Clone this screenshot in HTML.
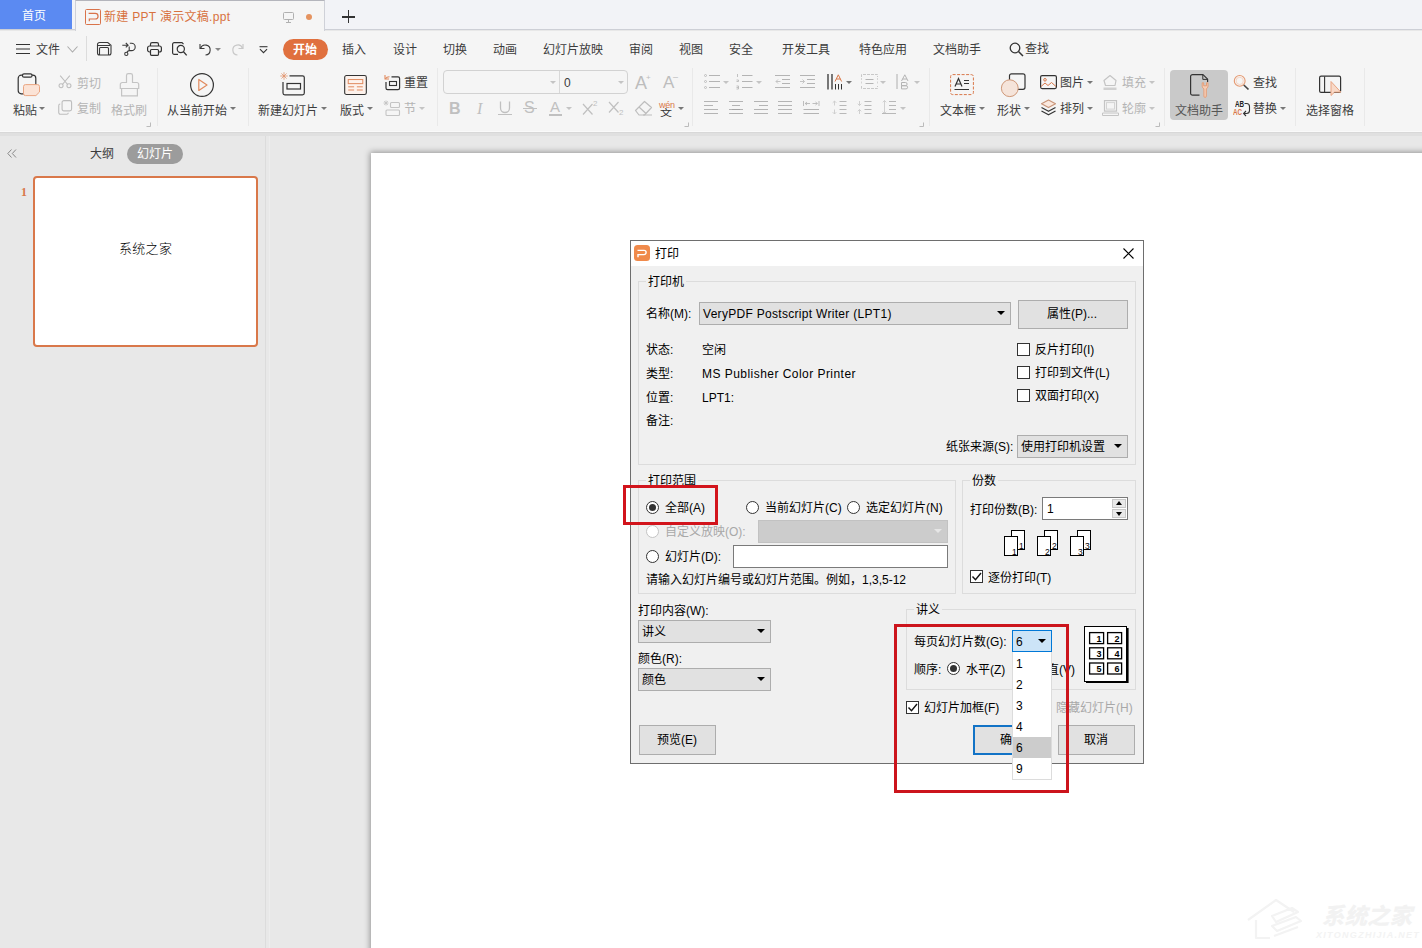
<!DOCTYPE html>
<html lang="zh-CN">
<head>
<meta charset="utf-8">
<title>新建 PPT 演示文稿.ppt</title>
<style>
*{box-sizing:border-box;margin:0;padding:0}
html,body{width:1422px;height:948px;overflow:hidden;background:#e8e8e8}
body{position:relative;font-family:"Liberation Sans","Noto Sans CJK SC",sans-serif;font-size:12px;color:#3c3c3c;}
.a{position:absolute}
.t{position:absolute;white-space:nowrap;line-height:16px;height:16px;font-size:12px;margin-top:1px}
.g{color:#b4b4b4}
svg{position:absolute;overflow:visible}
.sep{position:absolute;width:1px;background:#e9e9e9;top:68px;height:58px}
.ar{position:absolute;width:0;height:0;border-left:3px solid transparent;border-right:3px solid transparent;border-top:3px solid #777}
.ar.g{border-top-color:#c4c4c4}
/* dialog */
.t.d{color:#000}
.t.lbl{background:#f0f0f0;padding:0 2px}
.grp{position:absolute;border:1px solid #dcdcdc}
.grp>span{position:absolute;top:-9px;left:7px;background:#f0f0f0;padding:0 2px;line-height:16px;white-space:nowrap;color:#000}
.cmb{position:absolute;background:#e1e1e1;border:1px solid #adadad}
.dar{position:absolute;width:0;height:0;border-left:4px solid transparent;border-right:4px solid transparent;border-top:4px solid #000}
.btn{position:absolute;background:#e1e1e1;border:1px solid #adadad;text-align:center;color:#000}
.chk{position:absolute;width:13px;height:13px;border:1px solid #333;background:#fff}
.rad{position:absolute;width:13px;height:13px;border:1px solid #333;border-radius:50%;background:#fff}
.rad.on::after{content:"";position:absolute;left:2px;top:2px;width:7px;height:7px;border-radius:50%;background:#333}
</style>
</head>
<body>
<!-- TABBAR -->
<div class="a" id="tabbar" style="left:0;top:0;width:1422px;height:30px;background:#f2f3f7;border-bottom:1px solid #cdcfd6"></div>
<div class="a" style="left:0;top:0;width:72px;height:29px;background:#5b8af2"></div>
<div class="t" style="left:22px;top:7px;color:#fff">首页</div>
<div class="a" style="left:75px;top:0;width:250px;height:31px;background:#f5f5f5;border:1px solid #cfd1d8;border-top-color:#b4b5bc;border-bottom:none"></div>
<!-- MENU+RIBBON BG -->
<div class="a" style="left:0;top:31px;width:1422px;height:101px;background:#f5f5f5"></div>
<div class="a" style="left:0;top:131px;width:1422px;height:1px;background:#fafafa"></div><div class="a" style="left:0;top:132px;width:1422px;height:1px;background:#d8d8d8"></div><div class="a" style="left:0;top:133px;width:1422px;height:3px;background:#e0e0e0"></div>
<!-- TOP1 -->
<svg style="left:85px;top:9px" width="16" height="16" viewBox="0 0 16 16"><rect x=".5" y=".5" width="15" height="15" rx="1" fill="none" stroke="#d9734a" stroke-width="1"/><path d="M4.300 12.300V10H10.200a2.850 2.850 0 0 0 0-5.700H3.600" fill="none" stroke="#d9734a" stroke-width="1.200"/></svg>
<div class="t" style="left:104px;top:8px;color:#d8723f;letter-spacing:0.3px">新建 PPT 演示文稿.ppt</div>
<svg style="left:283px;top:12px" width="11" height="11" viewBox="0 0 11 11"><rect x=".5" y=".5" width="10" height="7" rx="1" fill="none" stroke="#b0b0b0"/><path d="M5.5 7.5v2.5M3 10.5h5" stroke="#b0b0b0" fill="none"/></svg>
<div class="a" style="left:306px;top:14px;width:6px;height:6px;border-radius:50%;background:#e5935f"></div>
<div class="a" style="left:342px;top:16px;width:13px;height:1.5px;background:#333"></div>
<div class="a" style="left:347.7px;top:10px;width:1.5px;height:13px;background:#333"></div>
<!-- menu row -->
<svg style="left:16px;top:43px" width="15" height="12" viewBox="0 0 15 12"><path d="M0 1.5h14M0 6h14M0 10.5h14" stroke="#333" stroke-width="1.2" fill="none"/></svg>
<div class="t" style="left:36px;top:41px">文件</div>
<svg style="left:67px;top:46px" width="11" height="7" viewBox="0 0 11 7"><path d="M.5 .5l5 5.5 5-5.5" stroke="#aaa" stroke-width="1.1" fill="none"/></svg>
<div class="a" style="left:86px;top:36px;width:1px;height:25px;background:#dcdcdc"></div>
<!-- save -->
<svg style="left:97px;top:42px" width="15" height="14" viewBox="0 0 15 14"><path d="M.5 2.500A2 2 0 0 1 2.500 .5h8.300l3.200 2.800v7.700a2 2 0 0 1-2 2H2.500a2 2 0 0 1-2-2z" fill="none" stroke="#3a3a3a" stroke-width="1.100"/><path d="M.5 3.500h12.500M2.500 13V6.500a1 1 0 0 1 1-1h7a1 1 0 0 1 1 1V13" fill="none" stroke="#3a3a3a" stroke-width="1.100"/></svg>
<!-- export -->
<svg style="left:122px;top:42px" width="15" height="15" viewBox="0 0 15 15"><path d="M.3 3.200h5.700M3.800 1l2.300 2.200-2.300 2.200" fill="none" stroke="#3a3a3a" stroke-width="1.100"/><path d="M7.800 1.200h1.700a3.700 3.700 0 0 1 0 7.400H7.200V4.500M7.200 8.600Q5.300 8.800 5 10.300" fill="none" stroke="#3a3a3a" stroke-width="1.100"/><circle cx="4.300" cy="11.900" r="1.600" fill="none" stroke="#3a3a3a" stroke-width="1.100"/></svg>
<!-- print -->
<svg style="left:147px;top:42px" width="15" height="14" viewBox="0 0 15 14"><path d="M3.500 4V2.200A1.600 1.600 0 0 1 5.100 .6h4.800a1.600 1.600 0 0 1 1.600 1.600V4" fill="none" stroke="#333" stroke-width="1.200"/><rect x=".6" y="4" width="13.800" height="6" rx="2" fill="none" stroke="#333" stroke-width="1.200"/><rect x="3.500" y="7.500" width="8" height="5.800" rx="1" fill="#f5f5f5" stroke="#333" stroke-width="1.200"/></svg>
<!-- preview -->
<svg style="left:172px;top:42px" width="16" height="15" viewBox="0 0 16 15"><path d="M6 12.400H2.200A1.600 1.600 0 0 1 .6 10.800V2.200A1.600 1.600 0 0 1 2.200 .6H10l1.500 1.500" fill="none" stroke="#333" stroke-width="1.200"/><circle cx="8.800" cy="7" r="3.600" fill="none" stroke="#333" stroke-width="1.200"/><path d="M11.500 9.800l3.200 3.600" stroke="#333" stroke-width="1.300" fill="none"/></svg>
<!-- undo -->
<svg style="left:199px;top:43px" width="13" height="13" viewBox="0 0 13 13"><path d="M1 1v4.500h4.500" fill="none" stroke="#3a3a3a" stroke-width="1.100"/><path d="M1.500 5.200A5 5 0 1 1 6.500 12" fill="none" stroke="#3a3a3a" stroke-width="1.100"/></svg>
<div class="ar" style="left:215px;top:48px;border-top-color:#888"></div>
<!-- redo -->
<svg style="left:231px;top:43px" width="13" height="13" viewBox="0 0 13 13"><path d="M12 1v4.500H7.500" fill="none" stroke="#c8c8c8" stroke-width="1.200"/><path d="M11.500 5.200A5 5 0 1 0 6.500 12" fill="none" stroke="#c8c8c8" stroke-width="1.200"/></svg>
<!-- qat dropdown -->
<svg style="left:259px;top:46px" width="9" height="8" viewBox="0 0 10 9"><path d="M.5 .8h9" stroke="#333" stroke-width="1.200"/><path d="M1 3.500l4 4 4-4" stroke="#333" stroke-width="1.200" fill="none"/></svg>
<div class="a" style="left:283px;top:39px;width:45px;height:21px;border-radius:11px;background:#e0703e"></div>
<div class="t" style="left:293px;top:41px;color:#fff;font-weight:bold">开始</div>
<div class="t" style="left:342px;top:41px">插入</div>
<div class="t" style="left:393px;top:41px">设计</div>
<div class="t" style="left:443px;top:41px">切换</div>
<div class="t" style="left:493px;top:41px">动画</div>
<div class="t" style="left:543px;top:41px">幻灯片放映</div>
<div class="t" style="left:629px;top:41px">审阅</div>
<div class="t" style="left:679px;top:41px">视图</div>
<div class="t" style="left:729px;top:41px">安全</div>
<div class="t" style="left:782px;top:41px">开发工具</div>
<div class="t" style="left:859px;top:41px">特色应用</div>
<div class="t" style="left:933px;top:41px">文档助手</div>
<svg style="left:1009px;top:42px" width="15" height="15" viewBox="0 0 15 15"><circle cx="6" cy="6" r="4.800" fill="none" stroke="#333" stroke-width="1.300"/><path d="M9.500 9.500l4.500 4.500" stroke="#333" stroke-width="1.500"/></svg>
<div class="t" style="left:1025px;top:40px">查找</div>
<!-- /TOP1 -->
<!-- TOP2 -->
<!-- ribbon group 1 -->
<svg style="left:17px;top:70px" width="25" height="27" viewBox="0 0 25 27"><rect x="1.200" y="5.200" width="17.600" height="18.600" rx="3" fill="none" stroke="#333" stroke-width="1.200"/><rect x="5.500" y="3.800" width="9.500" height="3.400" rx="1.500" fill="#f5f5f5" stroke="#333" stroke-width="1.200"/><path d="M8.500 14.600h12a2 2 0 0 1 2 2v5.400l-3.600 3.600H8.500a2 2 0 0 1-2-2v-7a2 2 0 0 1 2-2z" fill="#fbe3d6" stroke="#e9a582" stroke-width="1"/></svg>
<div class="t" style="left:13px;top:101.500px">粘贴</div><div class="ar" style="left:39px;top:107px"></div>
<svg style="left:58px;top:75px" width="14" height="13.500" viewBox="0 0 16 16" preserveAspectRatio="none"><path d="M2.500 .8l8.500 10.500M13.500 .8L5 11.300" stroke="#bdbdbd" stroke-width="1.200" fill="none"/><circle cx="3.500" cy="12.700" r="2.300" fill="none" stroke="#bdbdbd" stroke-width="1.200"/><circle cx="12.500" cy="12.700" r="2.300" fill="none" stroke="#bdbdbd" stroke-width="1.200"/></svg>
<div class="t g" style="left:77px;top:75px">剪切</div>
<svg style="left:58px;top:100px" width="14.500" height="15" viewBox="0 0 16 16" preserveAspectRatio="none"><rect x="4.500" y=".6" width="10.500" height="11" rx="2" fill="none" stroke="#bdbdbd" stroke-width="1.200"/><path d="M2.500 4.200A1.800 1.800 0 0 0 .8 6v7.400a1.800 1.800 0 0 0 1.800 1.800h7a1.800 1.800 0 0 0 1.800-1.600" fill="none" stroke="#bdbdbd" stroke-width="1.200"/></svg>
<div class="t g" style="left:77px;top:100px">复制</div>
<svg style="left:119px;top:73px" width="21" height="24" viewBox="0 0 21 24"><path d="M7.500 9.500V2.500a1.800 1.800 0 0 1 1.800-1.800h2.400a1.800 1.800 0 0 1 1.800 1.800v7h4.200a2 2 0 0 1 2 2v4H1.300v-4a2 2 0 0 1 2-2z" fill="none" stroke="#c4c4c4" stroke-width="1.200"/><path d="M2.600 15.500v7.300h15.800v-7.300" fill="none" stroke="#c4c4c4" stroke-width="1.200"/></svg>
<div class="t g" style="left:111px;top:101.500px">格式刷</div>
<svg style="left:146px;top:122px" width="5" height="5" viewBox="0 0 5 5"><path d="M.5 4.500h4V.5" stroke="#bbb" fill="none"/></svg>
<div class="sep" style="left:157px"></div>
<!-- group 2 -->
<svg style="left:188.500px;top:71.500px" width="26" height="26" viewBox="0 0 26 26"><circle cx="13" cy="13" r="11.400" fill="none" stroke="#333" stroke-width="1.200"/><path d="M9.800 7.500v11l8.200-5.500z" fill="none" stroke="#e08a5e" stroke-width="1.200" stroke-linejoin="round"/></svg>
<div class="t" style="left:167px;top:101.500px">从当前开始</div><div class="ar" style="left:230px;top:107px"></div>
<div class="sep" style="left:248px"></div>
<!-- group 3 -->
<svg style="left:280px;top:72px" width="26" height="24" viewBox="0 0 26 24"><path d="M4 .2v7.600M.2 4h7.600M1.400 1.400l5.200 5.200M6.600 1.400L1.400 6.600" stroke="#e08a5e" stroke-width=".7" fill="none"/><path d="M9.500 3.800H22.500a1.800 1.800 0 0 1 1.800 1.800V21a1.800 1.800 0 0 1-1.800 1.800H4.800A1.800 1.800 0 0 1 3 21V10" fill="none" stroke="#333" stroke-width="1.200"/><rect x="7" y="11.500" width="13.500" height="5.500" fill="none" stroke="#333" stroke-width="1.200"/></svg>
<div class="t" style="left:258px;top:101.500px">新建幻灯片</div><div class="ar" style="left:321px;top:107px"></div>
<svg style="left:344px;top:75px" width="23" height="20" viewBox="0 0 25 22"><rect x=".6" y=".6" width="23.800" height="20.800" rx="2" fill="#fdf2ec" stroke="#333" stroke-width="1.200"/><rect x="4.500" y="5" width="16" height="4.500" fill="none" stroke="#e08a5e" stroke-width="1.100"/><path d="M4.500 13h6.500M4.500 16.500h6.500M14 13h6.500M14 16.500h6.500" stroke="#e08a5e" stroke-width="1.100"/></svg>
<div class="t" style="left:340px;top:101.500px">版式</div><div class="ar" style="left:367px;top:107px"></div>
<svg style="left:383px;top:74px" width="18" height="17" viewBox="0 0 18 17"><path d="M2 1v4h4" fill="none" stroke="#e08a5e" stroke-width="1.100"/><path d="M2.300 4.800A5 5 0 0 1 6.500 2.800" fill="none" stroke="#e08a5e" stroke-width="1.100"/><path d="M8.500 2.800H15a1.600 1.600 0 0 1 1.600 1.600V14a1.600 1.600 0 0 1-1.600 1.600H4.600A1.600 1.600 0 0 1 3 14V8" fill="none" stroke="#333" stroke-width="1.200"/><rect x="6.500" y="7.500" width="7" height="4" fill="none" stroke="#333" stroke-width="1.100"/></svg>
<div class="t" style="left:404px;top:74px">重置</div>
<svg style="left:383px;top:100px" width="18" height="17" viewBox="0 0 18 17"><path d="M3 .5v5M.5 3h5M1.200 1.200l3.600 3.600M4.800 1.200L1.200 4.800" stroke="#c4c4c4" stroke-width=".9" fill="none"/><rect x="7.500" y="2.500" width="9" height="5" rx="1" fill="none" stroke="#c4c4c4" stroke-width="1.100"/><rect x="3" y="10" width="13.500" height="5.500" rx="1" fill="none" stroke="#c4c4c4" stroke-width="1.100"/></svg>
<div class="t g" style="left:404px;top:100px">节</div><div class="ar g" style="left:419px;top:107px"></div>
<div class="sep" style="left:437px"></div>
<!-- font group -->
<div class="a" style="left:443px;top:70px;width:185px;height:24px;border:1px solid #d2d2d2;border-radius:4px;background:#f5f5f5"></div>
<div class="a" style="left:559px;top:71px;width:1px;height:22px;background:#d8d8d8"></div>
<div class="ar g" style="left:550px;top:81px"></div><div class="ar g" style="left:618px;top:81px"></div>
<div class="t" style="left:564px;top:74px">0</div>
<div class="t" style="left:635px;top:74px;font-size:18px;color:#bdbdbd;font-weight:normal">A</div>
<div class="t" style="left:646px;top:69px;font-size:8px;color:#bdbdbd">+</div>
<div class="t" style="left:663px;top:74px;font-size:17px;color:#bdbdbd">A</div>
<div class="t" style="left:673px;top:68px;font-size:9px;color:#bdbdbd">–</div>
<div class="t" style="left:449px;top:100px;font-size:16px;color:#c0c0c0;font-weight:bold">B</div>
<div class="t" style="left:477px;top:100px;font-size:16px;color:#c0c0c0;font-style:italic;font-family:'Liberation Serif',serif">I</div>
<svg style="left:498px;top:101px" width="14" height="16" viewBox="0 0 14 16"><path d="M2.500 .5v6.500a4.500 4.500 0 0 0 9 0V.5" fill="none" stroke="#c0c0c0" stroke-width="1.300"/><path d="M0 13.500h14" stroke="#c0c0c0" stroke-width="1"/></svg>
<div class="t" style="left:524px;top:99px;font-size:16px;color:#c0c0c0">S</div><div class="a" style="left:523px;top:108px;width:14px;height:1px;background:#c0c0c0"></div>
<div class="t" style="left:550px;top:98px;font-size:15px;color:#c0c0c0">A</div>
<div class="a" style="left:549px;top:114px;width:13px;height:2px;background:#c0c0c0"></div>
<div class="ar g" style="left:566px;top:107px"></div>
<svg style="left:582px;top:101px" width="18" height="14" viewBox="0 0 18 14"><path d="M1 3l9.500 10.500M10.500 3L1 13.500" stroke="#c0c0c0" stroke-width="1.200"/></svg>
<div class="t" style="left:593px;top:95px;font-size:8px;color:#c0c0c0">2</div>
<svg style="left:608px;top:101px" width="18" height="14" viewBox="0 0 18 14"><path d="M1 1l9.500 10.500M10.500 1L1 11.500" stroke="#c0c0c0" stroke-width="1.200"/></svg>
<div class="t" style="left:619px;top:104px;font-size:8px;color:#c0c0c0">2</div>
<svg style="left:634px;top:100px" width="19" height="17" viewBox="0 0 19 17"><path d="M1.500 10.500L10.500 1.500l7 6-7 7.500H5z" fill="none" stroke="#bdbdbd" stroke-width="1.200" stroke-linejoin="round"/><path d="M5 7l7 6.500M9 15h9" stroke="#bdbdbd" stroke-width="1.200" fill="none"/></svg>
<div class="t" style="left:659px;top:95.500px;font-size:9px;color:#d9784a;letter-spacing:-.2px">wén</div>
<div class="t" style="left:660px;top:104px;font-size:12px;color:#333;transform:scaleY(.75)">文</div>
<div class="ar" style="left:678px;top:107px"></div>
<svg style="left:684px;top:122px" width="5" height="5" viewBox="0 0 5 5"><path d="M.5 4.500h4V.5" stroke="#bbb" fill="none"/></svg>
<div class="sep" style="left:692px"></div>
<!-- /TOP2 -->
<!-- TOP3 -->
<!-- paragraph group row1 -->
<svg style="left:704px;top:74px" width="17" height="15" viewBox="0 0 17 15"><g fill="none" stroke="#b4b4b4" stroke-width=".8"><circle cx="1.500" cy="1.500" r="1"/><circle cx="1.500" cy="7.500" r="1"/><circle cx="1.500" cy="13.500" r="1"/></g><path d="M5 1.500h11M5 7.500h11M5 13.500h11" stroke="#b4b4b4"/></svg>
<div class="ar g" style="left:723px;top:81px"></div>
<svg style="left:736px;top:74px" width="17" height="15" viewBox="0 0 17 15"><path d="M1.500 0v3M.5 6h2v1.500h-2M.5 12h2v3h-2M.5 13.500h2" stroke="#b4b4b4" stroke-width=".8" fill="none"/><path d="M6 1.500h10.500M6 7.500h10.500M6 13.500h10.500" stroke="#b4b4b4"/></svg>
<div class="ar g" style="left:756px;top:81px"></div>
<svg style="left:775px;top:74px" width="16" height="15" viewBox="0 0 16 15"><path d="M0 1.500h15M7 5.500h8M7 9.500h8M0 13.500h15" stroke="#b4b4b4"/><path d="M5.500 7.500H1M3 5.500L1 7.500l2 2" stroke="#c4c4c4" stroke-width="1" fill="none"/></svg>
<svg style="left:800px;top:74px" width="16" height="15" viewBox="0 0 16 15"><path d="M0 1.500h15M7 5.500h8M7 9.500h8M0 13.500h15" stroke="#b4b4b4"/><path d="M0 7.500h4.500M2.500 5.500l2 2-2 2" stroke="#c4c4c4" stroke-width="1" fill="none"/></svg>
<svg style="left:827px;top:74px" width="17" height="16" viewBox="0 0 17 16"><path d="M1 0v15.500M5 0v15.500" stroke="#333" stroke-width="1.300"/><path d="M8.500 10v5.500M11.500 10v5.500M14.500 10v5.500" stroke="#333" stroke-width="1"/><path d="M8 7.500L11.300 .8 14.600 7.500M9.200 5h4.200" stroke="#d9784a" stroke-width="1" fill="none"/></svg>
<div class="ar" style="left:846px;top:81px"></div>
<svg style="left:861px;top:74px" width="17" height="15" viewBox="0 0 17 15"><path d="M.5 3V.5h16V3M.5 12v2.500h16V12" stroke="#c8c8c8" stroke-width="1" fill="none" stroke-dasharray="3 1"/><path d="M.5 4v7M16.500 4v7" stroke="#d4d4d4" stroke-dasharray="2 1.500"/><path d="M4.500 5.500h8M4.500 9.500h8" stroke="#b4b4b4"/></svg>
<div class="ar g" style="left:880px;top:81px"></div>
<svg style="left:896px;top:74px" width="16" height="16" viewBox="0 0 16 16"><path d="M1 0v15" stroke="#b4b4b4" stroke-width="1.100"/><path d="M5.500 7L8.800 .8 12 7M6.500 5h4.500" stroke="#b4b4b4" stroke-width="1" fill="none"/><path d="M5.500 8.500h4a1.600 1.600 0 0 1 0 3.200h-4zM5.500 11.700h4.500a1.600 1.600 0 0 1 0 3.200H5.500z" stroke="#b4b4b4" stroke-width="1" fill="none"/></svg>
<div class="ar g" style="left:914px;top:81px"></div>
<!-- row2 -->
<svg style="left:704px;top:100px" width="16" height="15" viewBox="0 0 16 15"><path d="M0 1.500h14M0 5.500h9M0 9.500h14M0 13.500h14" stroke="#b4b4b4"/></svg>
<svg style="left:729px;top:100px" width="16" height="15" viewBox="0 0 16 15"><path d="M0 1.500h14M3 5.500h8M0 9.500h14M0 13.500h14" stroke="#b4b4b4"/><path d="M3 9.500h8" stroke="#a4a4a4"/></svg>
<svg style="left:754px;top:100px" width="16" height="15" viewBox="0 0 16 15"><path d="M0 1.500h14M5 5.500h9M0 9.500h14M0 13.500h14" stroke="#b4b4b4"/></svg>
<svg style="left:778px;top:100px" width="16" height="15" viewBox="0 0 16 15"><path d="M0 1.500h14M0 5.500h14M0 9.500h14M0 13.500h14" stroke="#b4b4b4"/></svg>
<svg style="left:803px;top:100px" width="17" height="15" viewBox="0 0 17 15"><path d="M.5 1v5M16 1v5M2 3.500h5M9.500 3.500h5M4 2L2.200 3.500 4 5M12.500 2l1.800 1.500L12.500 5" stroke="#b8b8b8" stroke-width=".9" fill="none"/><path d="M.5 9.500h15.500M.5 13.500h15.500" stroke="#b4b4b4"/></svg>
<svg style="left:832px;top:100px" width="15" height="15" viewBox="0 0 15 15"><path d="M2.500 1v4.500M.7 2.800l1.800-1.800 1.800 1.800M2.500 14V9.500M.7 12.200l1.800 1.800 1.800-1.800" stroke="#cccccc" stroke-width=".9" fill="none"/><path d="M7.500 1.500h7M7.500 5.500h7M7.500 9.500h7M7.500 13.500h7" stroke="#b8b8b8"/></svg>
<svg style="left:857px;top:100px" width="15" height="15" viewBox="0 0 15 15"><path d="M2.500 1v4.500M.7 3.700l1.800 1.800 1.800-1.800M2.500 14V9.500M.7 11.300l1.800-1.800 1.800 1.800" stroke="#cccccc" stroke-width=".9" fill="none"/><path d="M7.500 1.500h7M7.500 5.500h7M7.500 9.500h7M7.500 13.500h7" stroke="#b8b8b8"/></svg>
<svg style="left:882px;top:100px" width="15" height="15" viewBox="0 0 15 15"><path d="M2.500 .5v13M.8 2.300L2.500 .5l1.700 1.800M.8 11.700l1.700 1.800 1.700-1.800" stroke="#cccccc" stroke-width=".9" fill="none"/><path d="M0 13.500h14M7 1.500h7M7 5.500h7M7 9.500h7" stroke="#b8b8b8"/></svg>
<div class="ar g" style="left:900px;top:107px"></div>
<svg style="left:919px;top:122px" width="5" height="5" viewBox="0 0 5 5"><path d="M.5 4.500h4V.5" stroke="#bbb" fill="none"/></svg>
<div class="sep" style="left:929px"></div>
<!-- insert group -->
<svg style="left:950px;top:74px" width="24" height="22" viewBox="0 0 24 22"><rect x=".6" y=".6" width="22.800" height="20" rx="2" fill="none" stroke="#d9784a" stroke-width="1" stroke-dasharray="3 1.500"/><path d="M5 12.500L8.500 4.500 12 12.500M6.200 10h4.600" stroke="#333" stroke-width="1.200" fill="none"/><path d="M14 6.500h5M14 9.500h5M4.500 15.500h14.500" stroke="#333" stroke-width="1.100"/></svg>
<div class="t" style="left:940px;top:101.500px">文本框</div><div class="ar" style="left:979px;top:107px"></div>
<svg style="left:1001px;top:73px" width="25" height="25" viewBox="0 0 25 25"><rect x="8.500" y=".8" width="15.500" height="15.500" rx="2" fill="none" stroke="#333" stroke-width="1.200"/><circle cx="8.800" cy="15.200" r="8.400" fill="#f5e4da" stroke="#cf9878" stroke-width="1"/></svg>
<div class="t" style="left:997px;top:101.500px">形状</div><div class="ar" style="left:1024px;top:107px"></div>
<svg style="left:1040px;top:75px" width="17" height="15" viewBox="0 0 17 15"><rect x=".6" y=".6" width="15.800" height="13" rx="1.500" fill="none" stroke="#333" stroke-width="1.200"/><circle cx="5" cy="4.800" r="1.300" fill="none" stroke="#d9784a" stroke-width="1"/><path d="M1 11.500l4-3.500 3 2.500 3.500-3 4.500 4" stroke="#d9784a" stroke-width="1" fill="none"/></svg>
<div class="t" style="left:1060px;top:74px">图片</div><div class="ar" style="left:1087px;top:81px"></div>
<svg style="left:1040px;top:99px" width="17" height="17" viewBox="0 0 17 17"><path d="M8.500 1L15.500 4.800 8.500 8.600 1.500 4.800z" fill="#fbe9df" stroke="#c89478" stroke-width="1.100" stroke-linejoin="round"/><path d="M1.500 8.500l7 3.800 7-3.800M1.500 12l7 3.800 7-3.800" fill="none" stroke="#333" stroke-width="1.200" stroke-linejoin="round"/></svg>
<div class="t" style="left:1060px;top:100px">排列</div><div class="ar" style="left:1087px;top:107px"></div>
<svg style="left:1102px;top:74px" width="17" height="17" viewBox="0 0 17 17"><path d="M8 1.500l6 5-1 5H3.500l-1.500-5z" fill="none" stroke="#c4c4c4" stroke-width="1.200" stroke-linejoin="round"/><path d="M1.500 13.500h13v2.500h-13z" fill="#d0d0d0"/></svg>
<div class="t g" style="left:1122px;top:74px">填充</div><div class="ar g" style="left:1149px;top:81px"></div>
<svg style="left:1102px;top:100px" width="17" height="16" viewBox="0 0 17 16"><rect x="2.500" y=".6" width="12" height="10.500" fill="none" stroke="#c4c4c4" stroke-width="1.200"/><rect x="4.500" y="2.600" width="8" height="6.500" fill="none" stroke="#d4d4d4" stroke-width="1"/><path d="M.5 13h16v2.500H.5z" fill="none" stroke="#c4c4c4" stroke-width="1"/></svg>
<div class="t g" style="left:1122px;top:100px">轮廓</div><div class="ar g" style="left:1149px;top:107px"></div>
<svg style="left:1155px;top:122px" width="5" height="5" viewBox="0 0 5 5"><path d="M.5 4.500h4V.5" stroke="#bbb" fill="none"/></svg>
<div class="sep" style="left:1164px"></div>
<!-- doc helper -->
<div class="a" style="left:1170px;top:70px;width:58px;height:50px;border-radius:4px;background:#c9c9c9"></div>
<svg style="left:1190px;top:74px" width="21" height="24" viewBox="0 0 21 24"><path d="M9.500 21.200H2.600A2 2 0 0 1 .6 19.200V2.600A2 2 0 0 1 2.600 .6h10.400l4.600 4.600V8" fill="none" stroke="#333" stroke-width="1.200" stroke-linejoin="round"/><path d="M12.800 .8v4.600h4.600" fill="none" stroke="#333" stroke-width="1"/><path d="M12.200 8.800v3.400a3 3 0 0 0 1.700 2.600v7.400a1.200 1.200 0 0 0 2.400 0v-7.400a3 3 0 0 0 1.700-2.600V8.800h-1.500v3h-2.800v-3z" fill="#f5cdb6" stroke="#e59a72" stroke-width=".9" stroke-linejoin="round"/></svg>
<div class="t" style="left:1175px;top:101.500px;color:#555">文档助手</div>
<svg style="left:1233px;top:74px" width="17" height="17" viewBox="0 0 17 17"><circle cx="6.700" cy="6.900" r="5.400" fill="none" stroke="#e59a72" stroke-width="1.100"/><circle cx="6.700" cy="6.900" r="3.600" fill="none" stroke="#f5d5c4" stroke-width="1"/><path d="M10.800 11l4.700 4.500" stroke="#444" stroke-width="1.700"/></svg>
<div class="t" style="left:1253px;top:74px">查找</div>
<div class="t" style="left:1235px;top:95px;font-size:9px;color:#222;font-weight:bold;transform-origin:0 50%;transform:scaleX(.7)">AB</div>
<div class="t" style="left:1232.500px;top:103px;font-size:9px;color:#d9784a;font-weight:bold;transform-origin:0 50%;transform:scaleX(.7)">AC</div>
<svg style="left:1243px;top:102px" width="8" height="14" viewBox="0 0 8 14"><path d="M1.500 1.500h2a3 3 0 0 1 3 3v4a3 3 0 0 1-3 3H.8M3 9L.6 11.500 3 14" stroke="#333" stroke-width="1.100" fill="none"/></svg>
<div class="t" style="left:1253px;top:100px">替换</div><div class="ar" style="left:1280px;top:107px"></div>
<div class="sep" style="left:1295px"></div>
<svg style="left:1319px;top:75px" width="24" height="22" viewBox="0 0 24 22"><rect x=".6" y="1.200" width="21" height="16.200" rx="1.500" fill="none" stroke="#333" stroke-width="1.200"/><path d="M5.600 1.500v15.500" stroke="#333" stroke-width="1.100"/><path d="M12 6.500v14l3.600-3.400h6.200z" fill="#f8d9c8" stroke="#e9a582" stroke-width="1" stroke-linejoin="round"/></svg>
<div class="t" style="left:1306px;top:101.500px">选择窗格</div>
<div class="sep" style="left:1364px"></div>
<!-- /TOP3 -->
<!-- TOPCONTENT -->
<!-- LEFTPANEL -->
<svg style="left:7px;top:149px" width="10" height="9" viewBox="0 0 10 9"><path d="M4.500 .5L.8 4.500l3.700 4M9 .5L5.300 4.500l3.700 4" stroke="#888" stroke-width="1" fill="none"/></svg>
<div class="t" style="left:90px;top:145px">大纲</div>
<div class="a" style="left:127px;top:144px;width:56px;height:20px;border-radius:10px;background:#9c9c9c"></div>
<div class="t" style="left:137px;top:145px;color:#fff">幻灯片</div>
<div class="t" style="left:21px;top:183px;color:#d9784a;font-weight:bold;font-family:'Liberation Serif',serif;font-size:12px">1</div>
<div class="a" style="left:33px;top:176px;width:225px;height:171px;border:2px solid #d9784a;border-radius:4px;background:#fff"></div>
<div class="t" style="left:119px;top:240px;font-size:13px;color:#000;letter-spacing:.3px;font-weight:300">系统之家</div>

<div class="a" style="left:265px;top:136px;width:1px;height:812px;background:#dcdcdc"></div><div class="a" style="left:269px;top:136px;width:1px;height:812px;background:#ededed"></div>
<!-- SLIDE -->
<div class="a" style="left:371px;top:153px;width:1060px;height:800px;background:#fff;box-shadow:0 0 6px 1px rgba(0,0,0,.36)"></div>
<!-- DIALOG -->
<div class="a" style="left:630px;top:240px;width:514px;height:524px;background:#f0f0f0;border:1px solid #6e6e6e"></div>
<div class="a" style="left:631px;top:241px;width:512px;height:25px;background:#fff"></div>
<svg style="left:634px;top:245px" width="16" height="16" viewBox="0 0 16 16"><rect width="16" height="16" rx="3.500" fill="#f08a4b"/><path d="M4 12.300V9.600h6a2.100 2.100 0 0 0 0-4.200H3.500" fill="none" stroke="#fff" stroke-width="1.400"/></svg>
<div class="t d" style="left:655px;top:245px">打印</div>
<svg style="left:1123px;top:248px" width="11" height="11" viewBox="0 0 11 11"><path d="M.5 .5l10 10M10.500 .5l-10 10" stroke="#000" stroke-width="1.100"/></svg>
<!-- printer group -->
<div class="grp" style="left:638px;top:281px;width:498px;height:184px"></div>
<div class="t d lbl" style="left:646px;top:273px">打印机</div>
<div class="t d" style="left:646px;top:305px">名称(M):</div>
<div class="cmb" style="left:699px;top:302px;width:312px;height:23px"></div>
<div class="t d" style="left:703px;top:305px;letter-spacing:.3px">VeryPDF Postscript Writer (LPT1)</div>
<div class="dar" style="left:997px;top:311px"></div>
<div class="btn" style="left:1018px;top:300px;width:110px;height:29px"></div>
<div class="t d" style="left:1047px;top:305px">属性(P)...</div>
<div class="t d" style="left:646px;top:341px">状态:</div><div class="t d" style="left:702px;top:341px">空闲</div>
<div class="t d" style="left:646px;top:365px">类型:</div><div class="t d" style="left:702px;top:365px;letter-spacing:.46px">MS Publisher Color Printer</div>
<div class="t d" style="left:646px;top:389px">位置:</div><div class="t d" style="left:702px;top:389px">LPT1:</div>
<div class="t d" style="left:646px;top:412px">备注:</div>
<div class="chk" style="left:1017px;top:343px"></div><div class="t d" style="left:1035px;top:341px">反片打印(I)</div>
<div class="chk" style="left:1017px;top:366px"></div><div class="t d" style="left:1035px;top:364px">打印到文件(L)</div>
<div class="chk" style="left:1017px;top:389px"></div><div class="t d" style="left:1035px;top:387px">双面打印(X)</div>
<div class="t d" style="left:946px;top:438px">纸张来源(S):</div>
<div class="cmb" style="left:1017px;top:435px;width:111px;height:23px"></div>
<div class="t d" style="left:1021px;top:438px">使用打印机设置</div>
<div class="dar" style="left:1114px;top:444px"></div>
<!-- range group -->
<div class="grp" style="left:638px;top:480px;width:318px;height:114px"></div>
<div class="t d lbl" style="left:646px;top:472px">打印范围</div>
<div class="rad on" style="left:646px;top:501px"></div><div class="t d" style="left:665px;top:499px">全部(A)</div>
<div class="rad" style="left:746px;top:501px"></div><div class="t d" style="left:765px;top:499px">当前幻灯片(C)</div>
<div class="rad" style="left:847px;top:501px"></div><div class="t d" style="left:866px;top:499px">选定幻灯片(N)</div>
<div class="rad" style="left:646px;top:525px;border-color:#c4c4c4"></div><div class="t" style="left:665px;top:523px;color:#a8a8a8">自定义放映(O):</div>
<div class="a" style="left:758px;top:520px;width:190px;height:23px;background:#cccccc;border:1px solid #c2c2c2"></div>
<div class="dar" style="left:934px;top:529px;border-top-color:#e6e6e6"></div>
<div class="rad" style="left:646px;top:550px"></div><div class="t d" style="left:665px;top:548px">幻灯片(D):</div>
<div class="a" style="left:733px;top:545px;width:215px;height:23px;background:#fff;border:1px solid #7a7a7a"></div>
<div class="t d" style="left:646px;top:571px">请输入幻灯片编号或幻灯片范围。例如，1,3,5-12</div>
<!-- copies group -->
<div class="grp" style="left:962px;top:480px;width:174px;height:114px"></div>
<div class="t d lbl" style="left:970px;top:472px">份数</div>
<div class="t d" style="left:970px;top:501px">打印份数(B):</div>
<div class="a" style="left:1042px;top:497px;width:86px;height:23px;background:#fff;border:1px solid #7a7a7a"></div>
<div class="t d" style="left:1047px;top:500px">1</div>
<div class="a" style="left:1112px;top:499px;width:14px;height:9px;background:#e9e9e9;border:1px solid #c8c8c8"></div>
<div class="a" style="left:1112px;top:509px;width:14px;height:9px;background:#e9e9e9;border:1px solid #c8c8c8"></div>
<div class="a" style="left:1116px;top:501px;width:0;height:0;border-left:3px solid transparent;border-right:3px solid transparent;border-bottom:4px solid #000"></div>
<div class="a" style="left:1116px;top:512px;width:0;height:0;border-left:3px solid transparent;border-right:3px solid transparent;border-top:4px solid #000"></div>
<!-- collate icons -->
<svg style="left:1004px;top:530px" width="88" height="26" viewBox="0 0 88 26" font-family="Liberation Sans, sans-serif" font-size="8.500" fill="#000">
<g id="pg1"><rect x="7.500" y=".5" width="13" height="19" fill="#fff" stroke="#000"/><rect x=".5" y="6.500" width="13" height="19" fill="#fff" stroke="#000"/></g>
<text x="15" y="18.500">1</text><text x="8" y="24.500">1</text>
<g transform="translate(33,0)"><rect x="7.500" y=".5" width="13" height="19" fill="#fff" stroke="#000"/><rect x=".5" y="6.500" width="13" height="19" fill="#fff" stroke="#000"/><text x="15" y="18.500">2</text><text x="8" y="24.500">2</text></g>
<g transform="translate(66,0)"><rect x="7.500" y=".5" width="13" height="19" fill="#fff" stroke="#000"/><rect x=".5" y="6.500" width="13" height="19" fill="#fff" stroke="#000"/><text x="15" y="18.500">3</text><text x="8" y="24.500">3</text></g>
</svg>
<div class="chk" style="left:970px;top:570px"></div>
<svg style="left:970px;top:570px" width="13" height="13" viewBox="0 0 13 13"><path d="M2.500 6.500l3 3.200 5.500-6.700" stroke="#111" stroke-width="1.400" fill="none"/></svg>
<div class="t d" style="left:988px;top:569px">逐份打印(T)</div>
<!-- print what -->
<div class="t d" style="left:638px;top:602px">打印内容(W):</div>
<div class="cmb" style="left:638px;top:620px;width:133px;height:23px"></div>
<div class="t d" style="left:642px;top:623px">讲义</div>
<div class="dar" style="left:757px;top:629px"></div>
<div class="t d" style="left:638px;top:650px">颜色(R):</div>
<div class="cmb" style="left:638px;top:668px;width:133px;height:23px"></div>
<div class="t d" style="left:642px;top:671px">颜色</div>
<div class="dar" style="left:757px;top:677px"></div>
<div class="btn" style="left:639px;top:725px;width:77px;height:30px"></div>
<div class="t d" style="left:657px;top:731px">预览(E)</div>
<!-- handout group -->
<div class="grp" style="left:906px;top:609px;width:230px;height:81px"></div>
<div class="t d lbl" style="left:914px;top:601px">讲义</div>
<div class="t d" style="left:914px;top:633px">每页幻灯片数(G):</div>
<div class="t d" style="left:914px;top:661px">顺序:</div>
<div class="rad on" style="left:947px;top:662px"></div><div class="t d" style="left:966px;top:661px">水平(Z)</div>
<div class="t d" style="left:1035px;top:661px">垂直(V)</div>
<!-- layout icon -->
<svg style="left:1084px;top:626px" width="45" height="58" viewBox="0 0 45 58" font-family="Liberation Sans, sans-serif" font-size="9" font-weight="bold" fill="#000" text-anchor="end">
<path d="M2 56.300h41.800V2" stroke="#000" stroke-width="1.600" fill="none"/>
<rect x=".5" y=".5" width="42" height="55" fill="#fff" stroke="#000"/>
<g fill="#fff" stroke="#000" stroke-width="1.300"><rect x="5.600" y="6.600" width="14" height="11"/><rect x="23.600" y="6.600" width="14" height="11"/><rect x="5.600" y="21.800" width="14" height="11"/><rect x="23.600" y="21.800" width="14" height="11"/><rect x="5.600" y="37" width="14" height="11"/><rect x="23.600" y="37" width="14" height="11"/></g>
<text x="17.500" y="15.500">1</text><text x="35.500" y="15.500">2</text><text x="17.500" y="30.700">3</text><text x="35.500" y="30.700">4</text><text x="17.500" y="45.900">5</text><text x="35.500" y="45.900">6</text>
</svg>
<div class="chk" style="left:906px;top:701px"></div>
<svg style="left:906px;top:701px" width="13" height="13" viewBox="0 0 13 13"><path d="M2.500 6.500l3 3.200 5.500-6.700" stroke="#111" stroke-width="1.400" fill="none"/></svg>
<div class="t d" style="left:924px;top:699px">幻灯片加框(F)</div>
<div class="chk" style="left:1039px;top:701px;border-color:#c4c4c4"></div>
<div class="t" style="left:1056px;top:699px;color:#a8a8a8">隐藏幻灯片(H)</div>
<div class="btn" style="left:973px;top:725px;width:78px;height:30px;border:2px solid #1273c6"></div>
<div class="t d" style="left:1000px;top:731px">确定</div>
<div class="btn" style="left:1058px;top:725px;width:77px;height:30px"></div>
<div class="t d" style="left:1084px;top:731px">取消</div>
<!-- combo open -->
<div class="a" style="left:1012px;top:630px;width:40px;height:22px;background:#cce4f7;border:1px solid #0078d7"></div>
<div class="t d" style="left:1016px;top:633px">6</div>
<div class="dar" style="left:1038px;top:639px"></div>
<div class="a" style="left:1012px;top:652px;width:40px;height:128px;background:#fff;border:1px solid #dcdcdc;border-top:none"></div>
<div class="a" style="left:1013px;top:737px;width:38px;height:21px;background:#cccccc"></div>
<div class="t d" style="left:1016px;top:655px">1</div>
<div class="t d" style="left:1016px;top:676px">2</div>
<div class="t d" style="left:1016px;top:697px">3</div>
<div class="t d" style="left:1016px;top:718px">4</div>
<div class="t d" style="left:1016px;top:739px">6</div>
<div class="t d" style="left:1016px;top:760px">9</div>
<!-- red annotation -->
<div class="a" style="left:623px;top:485px;width:95px;height:40px;border:3px solid #d2141c"></div>
<div class="a" style="left:894px;top:624px;width:175px;height:169px;border:3px solid #cc141c;border-top-width:3.500px;border-bottom-width:3.500px"></div>
<!-- OVERLAYS -->
<svg style="left:1246px;top:894px" width="70" height="48" viewBox="0 0 70 48"><path d="M2 26L30 6l18 12M10 26v18h14M26 22l20-8 6 4-22 10zM26 32l24-9 5 4-24 10zM28 42l24-9" fill="none" stroke="#f3f3f3" stroke-width="2.200" stroke-linejoin="round"/></svg>
<div class="t" style="left:1322px;top:903px;height:26px;line-height:26px;font-size:22.500px;font-weight:900;font-style:italic;color:#f2f2f2;letter-spacing:0">系统之家</div>
<div class="t" style="left:1316px;top:929px;height:10px;line-height:10px;font-size:9px;font-weight:bold;font-style:italic;color:#f3f3f3;letter-spacing:1.300px">XITONGZHIJIA.NET</div>

</body>
</html>
